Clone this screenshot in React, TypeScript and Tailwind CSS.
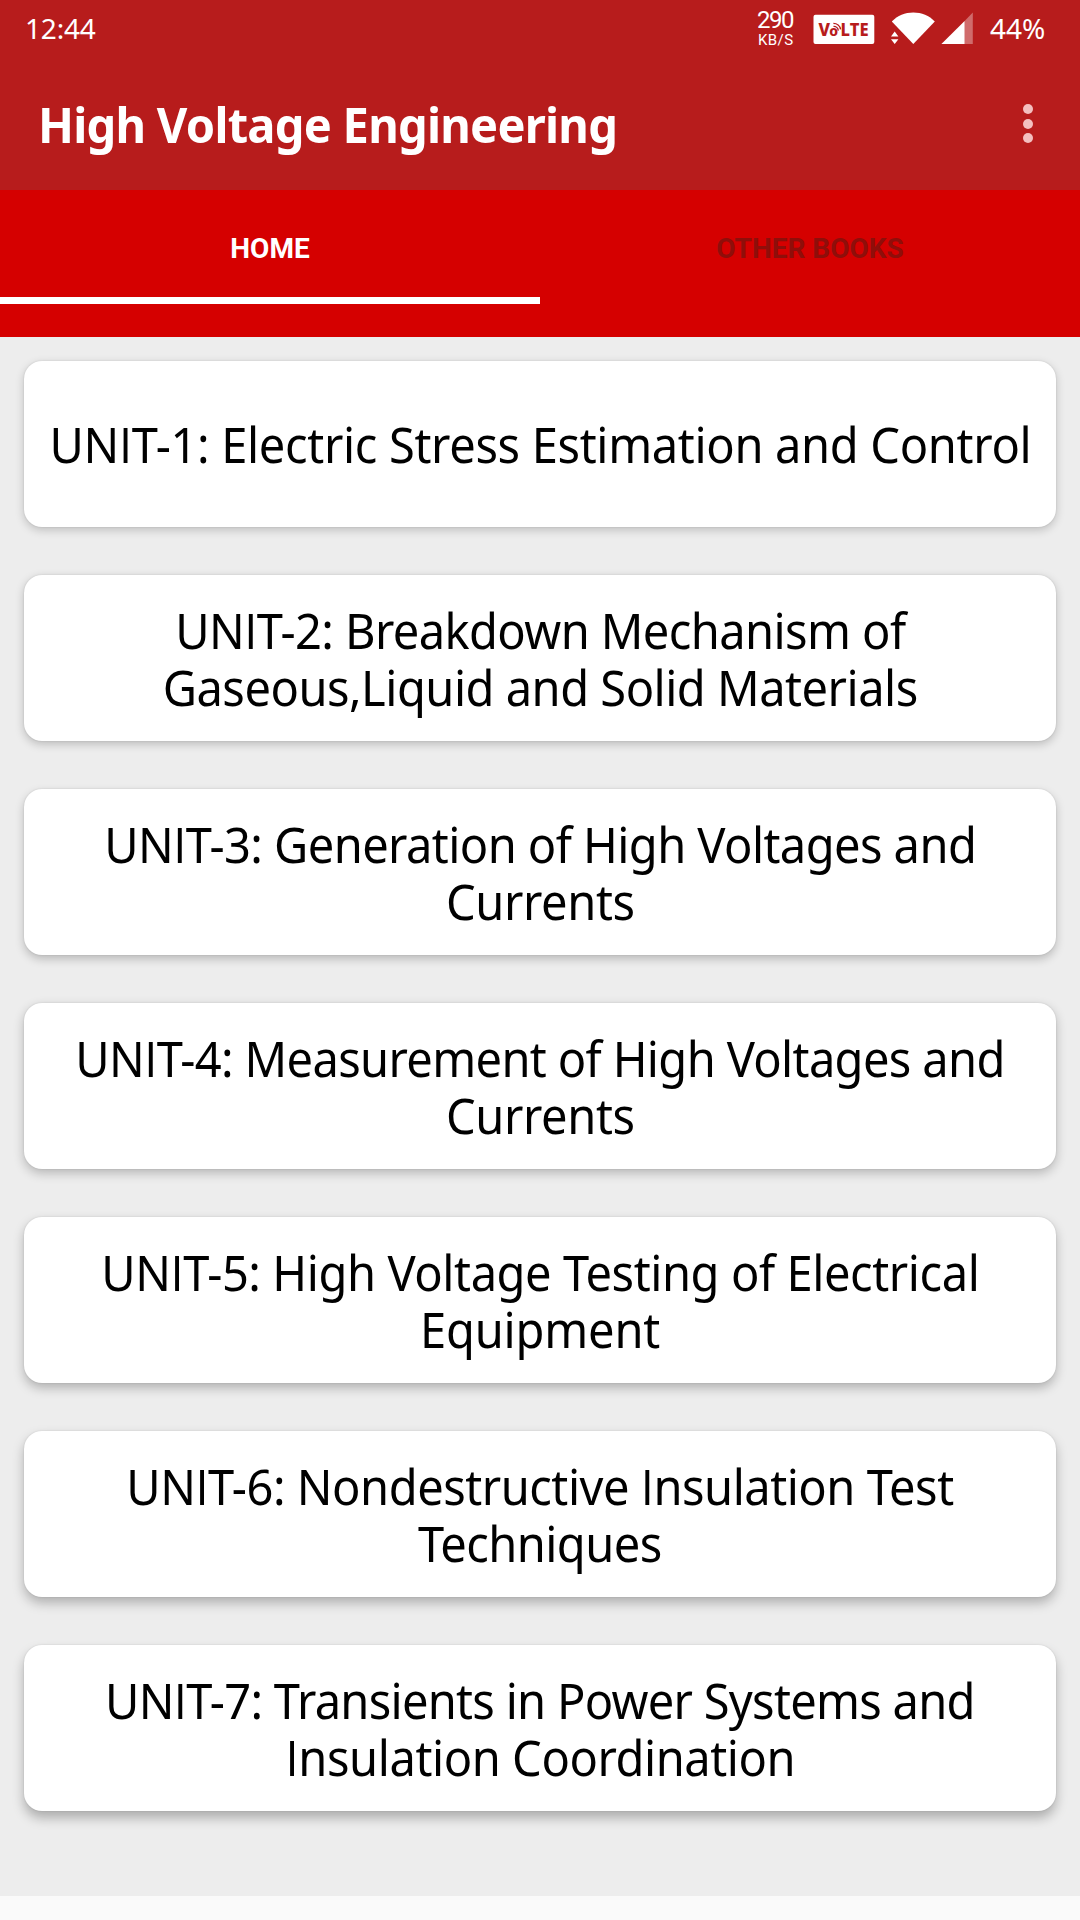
import { Fragment } from 'react';

type Line = { text: string; tracking: string };
type Unit = { lines: Line[]; shadow: string };

const units: Unit[] = [
  {
    lines: [{ text: 'UNIT-1: Electric Stress Estimation and Control', tracking: 'tracking-[-0.35px]' }],
    shadow: 'shadow-[0_3px_10px_rgba(0,0,0,0.2),0_0_2px_rgba(0,0,0,0.12)]',
  },
  {
    lines: [
      { text: 'UNIT-2: Breakdown Mechanism of', tracking: 'tracking-[-0.62px]' },
      { text: 'Gaseous,Liquid and Solid Materials', tracking: 'tracking-[-0.52px]' },
    ],
    shadow: 'shadow-[0_3px_10px_rgba(0,0,0,0.22),0_0_2px_rgba(0,0,0,0.12)]',
  },
  {
    lines: [
      { text: 'UNIT-3: Generation of High Voltages and', tracking: 'tracking-[-0.6px]' },
      { text: 'Currents', tracking: 'tracking-[-0.4px]' },
    ],
    shadow: 'shadow-[0_4px_10px_rgba(0,0,0,0.22),0_0_2px_rgba(0,0,0,0.12)]',
  },
  {
    lines: [
      { text: 'UNIT-4: Measurement of High Voltages and', tracking: 'tracking-[-0.68px]' },
      { text: 'Currents', tracking: 'tracking-[-0.4px]' },
    ],
    shadow: 'shadow-[0_4px_11px_rgba(0,0,0,0.24),0_0_2px_rgba(0,0,0,0.12)]',
  },
  {
    lines: [
      { text: 'UNIT-5: High Voltage Testing of Electrical', tracking: 'tracking-[-0.44px]' },
      { text: 'Equipment', tracking: 'tracking-[-0.2px]' },
    ],
    shadow: 'shadow-[0_5px_11px_rgba(0,0,0,0.25),0_0_2px_rgba(0,0,0,0.12)]',
  },
  {
    lines: [
      { text: 'UNIT-6: Nondestructive Insulation Test', tracking: 'tracking-[-0.5px]' },
      { text: 'Techniques', tracking: 'tracking-[-0.6px]' },
    ],
    shadow: 'shadow-[0_6px_12px_rgba(0,0,0,0.26),0_0_2px_rgba(0,0,0,0.12)]',
  },
  {
    lines: [
      { text: 'UNIT-7: Transients in Power Systems and', tracking: 'tracking-[-0.75px]' },
      { text: 'Insulation Coordination', tracking: 'tracking-[-0.45px]' },
    ],
    shadow: 'shadow-[0_7px_12px_rgba(0,0,0,0.27),0_0_2px_rgba(0,0,0,0.12)]',
  },
];

function PlainI({ text }: { text: string }) {
  return (
    <>
      {text.split('I').map((part, i) => (
        <Fragment key={i}>
          {i > 0 && <span className="font-['Open_Sans']">I</span>}
          {part}
        </Fragment>
      ))}
    </>
  );
}

function VolteBadge() {
  return (
    <svg className="mt-[14px] h-[31px] w-[62px]" viewBox="0 0 62 31">
      <rect x="0.5" y="0.7" width="60.8" height="29.2" rx="2" fill="#fff" />
      <g fill="#b71c1c" fontFamily="'Noto Sans', sans-serif" fontWeight="800">
        <text x="5.5" y="22" fontSize="17" textLength="11.5" lengthAdjust="spacingAndGlyphs">V</text>
        <text x="16.3" y="22" fontSize="14">o</text>
        <text x="27.6" y="22" fontSize="17" textLength="28" lengthAdjust="spacingAndGlyphs">LTE</text>
      </g>
      <g fill="none" stroke="#b71c1c" strokeWidth="1.4">
        <path d="M20.5 12.4a4.6 4.6 0 0 1 4.8 4.2" />
        <path d="M20.4 9.4a7.4 7.4 0 0 1 7.2 6" />
      </g>
    </svg>
  );
}

function WifiIcon() {
  return (
    <svg className="ml-[16px] mt-[12px] h-[34px] w-[45px]" viewBox="0 0 45 34" fill="#fff">
      <path d="M0.8 9.6C6.5 3.6 14 0.6 22.3 0.6S38.2 3.6 43.8 9.6L22.3 32Z" />
      <path d="M0 24.4 3.7 19.6 7.4 24.4ZM0 27.3H7.4L3.7 32.1Z" />
    </svg>
  );
}

function SignalIcon() {
  return (
    <svg className="ml-[5px] mt-[12px] h-[34px] w-[33px]" viewBox="0 0 33 34">
      <path d="M0.4 32 23.6 8.9V32Z" fill="#fff" />
      <path d="M23.6 8.9 31.8 0.6V32H23.6Z" fill="#fff" fillOpacity="0.35" />
    </svg>
  );
}

function StatusBar() {
  return (
    <div className="flex h-[60px] items-start pl-[25px] text-white">
      <div className="mt-[9px] w-[732px] text-[28px] leading-[38px] tracking-[-0.2px]">12:44</div>
      <div className="flex w-[56px] flex-col font-['Roboto']">
        <span className="mt-[7px] h-[25px] text-[24px] leading-[26px] tracking-[-1.5px]">290</span>
        <span className="pl-px text-[15px] leading-[16px] tracking-[0.4px]">KB/S</span>
      </div>
      <VolteBadge />
      <WifiIcon />
      <SignalIcon />
      <div className="mt-[9px] ml-[16px] text-[28px] leading-[38px]">44%</div>
    </div>
  );
}

function AppBar() {
  return (
    <div className="flex h-[130px] items-start justify-between pr-[45px] pl-[38px]">
      <h1 className="mt-[36px] origin-left scale-x-[0.96] text-[49px] leading-[57px] font-bold tracking-[-0.78px] whitespace-nowrap text-white">
        High Voltage Engineering
      </h1>
      <button aria-label="More options" className="mt-[44px] flex w-[14px] flex-col items-center gap-[4.5px]">
        <span className="size-[10px] rounded-full bg-[#f4bfbf]" />
        <span className="size-[10px] rounded-full bg-[#f4bfbf]" />
        <span className="size-[10px] rounded-full bg-[#f4bfbf]" />
      </button>
    </div>
  );
}

function Tabs() {
  return (
    <div className="h-[147px] bg-[#d50000] font-['Roboto'] text-[28px] font-bold">
      <div className="grid h-[114px] grid-cols-2">
        <button className="border-b-[7px] border-white pt-[10px] leading-[32px] text-white">HOME</button>
        <button className="border-b-[7px] border-transparent pt-[10px] leading-[32px] text-[#8f0e0a]">OTHER BOOKS</button>
      </div>
    </div>
  );
}

export default function App() {
  return (
    <div className="flex h-[1920px] w-[1080px] flex-col overflow-hidden bg-[#fafafa] font-['Noto_Sans',sans-serif]">
      <header className="bg-[#b71c1c]">
        <StatusBar />
        <AppBar />
      </header>
      <Tabs />
      <main className="flex h-[1559px] flex-col gap-[48px] bg-[#ededed] px-[24px] pt-[24px]">
        {units.map((unit) => (
          <section
            key={unit.lines[0].text}
            className={`flex h-[166px] shrink-0 flex-col items-center justify-center rounded-[18px] bg-white pt-px text-[49px] leading-[57px] text-black ${unit.shadow}`}
          >
            {unit.lines.map((line) => (
              <span key={line.text} className={`scale-x-[0.96] whitespace-nowrap ${line.tracking}`}>
                <PlainI text={line.text} />
              </span>
            ))}
          </section>
        ))}
      </main>
    </div>
  );
}
